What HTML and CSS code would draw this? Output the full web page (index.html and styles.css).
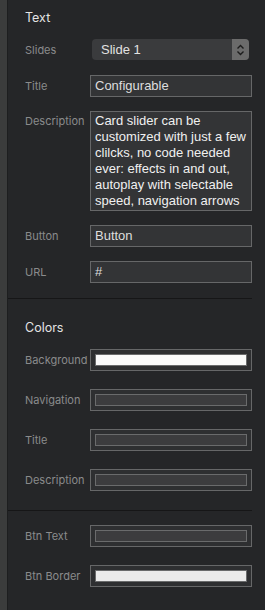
FILE: index.html
```html
<!DOCTYPE html>
<html lang="en">
  <head>
    <meta charset="UTF-8" />
    <title>Card Slider Settings</title>
    <link rel="stylesheet" href="styles.css">
  </head>
  <body>
    <div class="rail"></div>
    <div class="panel">
      <section class="group text-group">
        <h3>Text</h3>
        <div class="row slides-row">
          <label>Slides</label>
          <div class="select">
            <span>Slide 1</span>
            <span class="select-arrow">
              <svg width="9" height="12" viewBox="0 0 9 12">
                <path d="M1.5 4.5 L4.5 1.5 L7.5 4.5 M1.5 7.5 L4.5 10.5 L7.5 7.5" fill="none" stroke="#1c1c1c" stroke-width="1.4"/>
              </svg>
            </span>
          </div>
        </div>
        <div class="row">
          <label>Title</label>
          <div class="field">Configurable</div>
        </div>
        <div class="row top">
          <label>Description</label>
          <div class="field area">Card slider can be customized with just a few clilcks, no code needed ever: effects in and out, autoplay with selectable speed, navigation arrows</div>
        </div>
        <div class="row">
          <label>Button</label>
          <div class="field">Button</div>
        </div>
        <div class="row">
          <label>URL</label>
          <div class="field">#</div>
        </div>
      </section>

      <section class="group colors-group">
        <h3>Colors</h3>
        <div class="row">
          <label>Background</label>
          <div class="swatch"><div class="chip white"></div></div>
        </div>
        <div class="row">
          <label>Navigation</label>
          <div class="swatch"><div class="chip"></div></div>
        </div>
        <div class="row">
          <label>Title</label>
          <div class="swatch"><div class="chip"></div></div>
        </div>
        <div class="row">
          <label>Description</label>
          <div class="swatch"><div class="chip"></div></div>
        </div>
      </section>

      <section class="group btn-group">
        <div class="row">
          <label>Btn Text</label>
          <div class="swatch"><div class="chip"></div></div>
        </div>
        <div class="row">
          <label>Btn Border</label>
          <div class="swatch"><div class="chip light"></div></div>
        </div>
      </section>
    </div>
  </body>
</html>
```

FILE: styles.css
```css
body {
  margin: 0;
  height: 610px;
  display: flex;
  background: #252628;
  font-family: Inter, "Open Sans", sans-serif;
  overflow: hidden;
}
.rail {
  width: 7px;
  background: #3b3c3c;
  border-right: 1px solid #1d1e1f;
  flex-shrink: 0;
}
.panel {
  flex: 1;
  padding-right: 13px;
}
.group {
  padding-left: 17px;
  display: flex;
  flex-direction: column;
  border-bottom: 1px solid #161617;
}
.text-group {
  padding-top: 10px;
  padding-bottom: 15px;
  gap: 14px;
}
.colors-group {
  padding-top: 21px;
  padding-bottom: 19px;
  gap: 18px;
}
.colors-group h3 {
  margin-bottom: -5px;
}
.btn-group {
  padding-top: 14px;
  gap: 18px;
  border-bottom: none;
}
h3 {
  margin: 0 0 -1px;
  font-size: 12.5px;
  font-weight: 400;
  line-height: 16px;
  color: #e4e4e4;
}
.row {
  display: flex;
  align-items: center;
}
.row.top {
  align-items: flex-start;
}
.row.top label {
  padding-top: 3px;
}
.slides-row {
  margin-bottom: 1px;
}
label {
  width: 65px;
  flex-shrink: 0;
  font-size: 11px;
  line-height: 14px;
  color: #8a8b8c;
}
.select {
  flex: 1;
  margin-left: 2px;
  margin-right: 3px;
  height: 21px;
  display: flex;
  align-items: center;
  justify-content: space-between;
  background: #3a3b3d;
  border-radius: 4px;
  overflow: hidden;
  font-family: "Liberation Sans", Arial, sans-serif;
  font-size: 13px;
  color: #e2e2e2;
}
.select span:first-child {
  padding-left: 9px;
}
.select-arrow {
  width: 17px;
  height: 100%;
  background: #6b6b6b;
  display: flex;
  align-items: center;
  justify-content: center;
}
.field {
  flex: 1;
  height: 20px;
  border: 1px solid #666768;
  background: #333436;
  padding: 0 4px;
  font-family: "Liberation Sans", Arial, sans-serif;
  font-size: 13px;
  line-height: 20px;
  color: #dedede;
}
.field.area {
  height: 96px;
  line-height: 16px;
  padding-top: 1px;
  padding-bottom: 1px;
  overflow: hidden;
  color: #f0f0f0;
}
.swatch {
  flex: 1;
  height: 12px;
  border: 1px solid #666768;
  background: #2e2f31;
  padding: 4px;
}
.chip {
  height: 10px;
  border: 1px solid #6a6b6c;
  background: #3c3c3e;
}
.chip.white {
  background: #fafafa;
}
.chip.light {
  background: #ebebeb;
}
```
